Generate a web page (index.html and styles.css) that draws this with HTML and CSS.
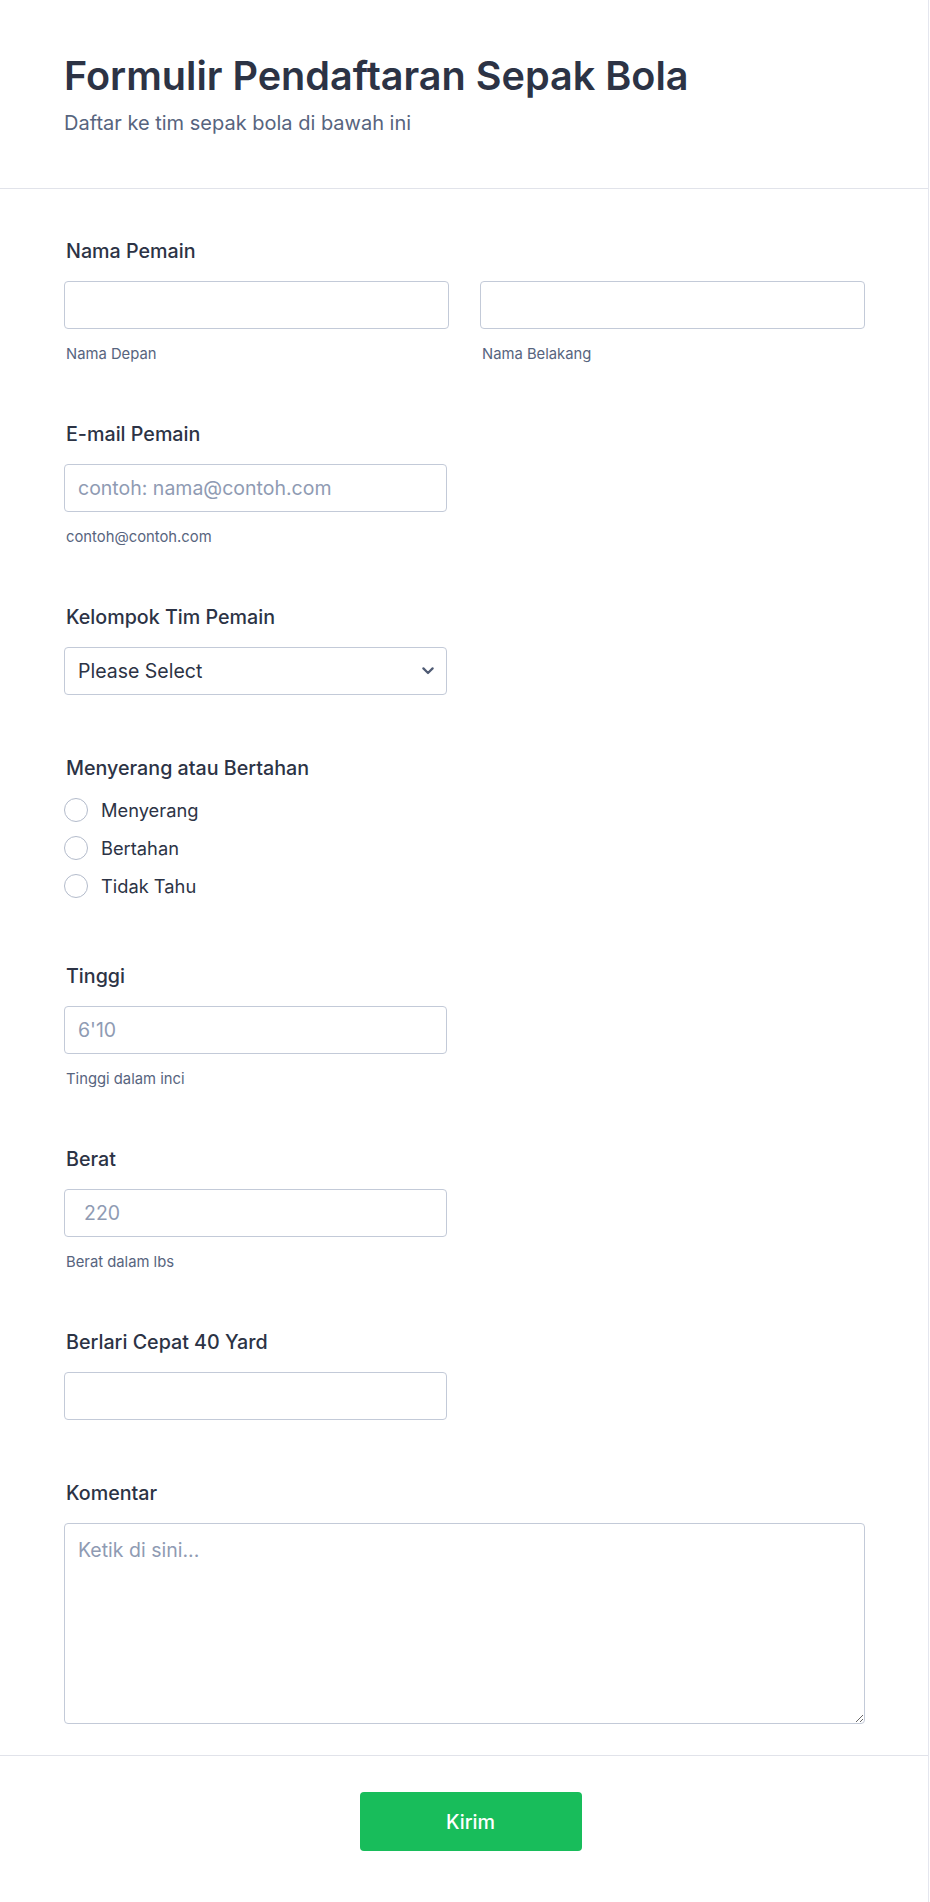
FILE: index.html
```html
<!DOCTYPE html>
<html lang="id">
<head>
<meta charset="utf-8">
<title>Formulir Pendaftaran Sepak Bola</title>
<link rel="stylesheet" href="styles.css">
</head>
<body>
<div class="page">
  <header class="form-header">
    <h1 class="form-title">Formulir Pendaftaran Sepak Bola</h1>
    <p class="form-subtitle">Daftar ke tim sepak bola di bawah ini</p>
  </header>

  <main class="form-body">
    <div class="field">
      <div class="label">Nama Pemain</div>
      <div class="name-row">
        <div class="name-col">
          <input class="input" type="text">
          <div class="sub">Nama Depan</div>
        </div>
        <div class="name-col">
          <input class="input" type="text">
          <div class="sub">Nama Belakang</div>
        </div>
      </div>
    </div>

    <div class="field">
      <div class="label">E-mail Pemain</div>
      <input class="input input-single" type="email" placeholder="contoh: nama@contoh.com">
      <div class="sub">contoh@contoh.com</div>
    </div>

    <div class="field field-plain">
      <div class="label">Kelompok Tim Pemain</div>
      <div class="select-wrap">
        <select class="select">
          <option>Please Select</option>
        </select>
        <svg class="chevron" width="12" height="8" viewBox="0 0 12 8" aria-hidden="true">
          <path d="M1.4 1.4 L6 6 L10.6 1.4" fill="none" stroke="#4f5b74" stroke-width="2.2" stroke-linecap="round" stroke-linejoin="round"/>
        </svg>
      </div>
    </div>

    <div class="field field-radio">
      <div class="label">Menyerang atau Bertahan</div>
      <div class="options">
        <label class="option"><span class="radio"></span><span class="option-text">Menyerang</span></label>
        <label class="option"><span class="radio"></span><span class="option-text">Bertahan</span></label>
        <label class="option"><span class="radio"></span><span class="option-text">Tidak Tahu</span></label>
      </div>
    </div>

    <div class="field">
      <div class="label">Tinggi</div>
      <input class="input input-single" type="text" placeholder="6'10">
      <div class="sub">Tinggi dalam inci</div>
    </div>

    <div class="field">
      <div class="label">Berat</div>
      <input class="input input-single input-number" type="text" placeholder="220">
      <div class="sub">Berat dalam lbs</div>
    </div>

    <div class="field field-plain">
      <div class="label">Berlari Cepat 40 Yard</div>
      <input class="input input-single" type="text">
    </div>

    <div class="field">
      <div class="label">Komentar</div>
      <textarea class="textarea" placeholder="Ketik di sini..."></textarea>
    </div>
  </main>

  <footer class="form-footer">
    <button class="submit" type="button">Kirim</button>
  </footer>
</div>
</body>
</html>
```

FILE: styles.css
```css
* {
  box-sizing: border-box;
}

html, body {
  margin: 0;
  padding: 0;
  background: #ffffff;
}

body {
  font-family: Inter, "Noto Sans", "Liberation Sans", sans-serif;
  color: #2c3345;
}

.page {
  width: 929px;
  min-height: 1902px;
  border-right: 1px solid #e4e6ee;
  background: #ffffff;
}

/* Header */
.form-header {
  padding: 53px 63px 53px 64px;
  border-bottom: 1px solid #e1e3ea;
}

.form-title {
  margin: 0;
  font-size: 39.6px;
  line-height: 46px;
  font-weight: 600;
  color: #2c3345;
}

.form-subtitle {
  margin: 12px 0 0 0;
  font-size: 20px;
  line-height: 24px;
  font-weight: 400;
  color: #57647e;
}

/* Body */
.form-body {
  padding: 50px 63px 31px 64px;
}

.field {
  padding-bottom: 58px;
}

.field-plain {
  padding-bottom: 61px;
}

.field-radio {
  padding-bottom: 66px;
}

.field:last-child {
  padding-bottom: 0;
}

.label {
  font-size: 19.7px;
  line-height: 24px;
  font-weight: 500;
  color: #2c3345;
  margin-bottom: 18px;
  padding-left: 2px;
}

.name-row {
  display: grid;
  grid-template-columns: 385px 385px;
  column-gap: 31px;
}

.input,
.select,
.textarea {
  display: block;
  font-family: inherit;
  font-size: 19.5px;
  color: #2c3345;
  background: #ffffff;
  border: 1px solid #c3cad8;
  border-radius: 4px;
  outline: none;
}

.input {
  width: 100%;
  height: 48px;
  padding: 0 13px;
}

.input-single {
  width: 383px;
}

.input-number {
  padding-left: 19px;
}

.input::placeholder,
.textarea::placeholder {
  color: #8f9bb3;
  opacity: 1;
}

.sub {
  margin-top: 15px;
  font-size: 14.8px;
  line-height: 20px;
  color: #57647e;
  padding-left: 2px;
}

/* Select */
.select-wrap {
  position: relative;
  width: 383px;
}

.select {
  width: 383px;
  height: 48px;
  padding: 0 40px 0 13px;
  appearance: none;
  -webkit-appearance: none;
}

.chevron {
  position: absolute;
  right: 13px;
  top: 20px;
  pointer-events: none;
}

/* Radios */
.options {
  display: flex;
  flex-direction: column;
  gap: 14px;
  margin-top: 5px;
}

.option {
  display: flex;
  align-items: center;
  gap: 13px;
  height: 24px;
}

.radio {
  width: 24px;
  height: 24px;
  border-radius: 50%;
  border: 1px solid #b3bbcb;
  background: #ffffff;
  flex: none;
}

.option-text {
  font-size: 18.3px;
  line-height: 24px;
  color: #2c3345;
}

/* Textarea */
.textarea {
  width: 801px;
  height: 201px;
  padding: 14px 13px;
  line-height: 24px;
  resize: vertical;
}

/* Footer */
.form-footer {
  border-top: 1px solid #e1e3ea;
  padding: 36px 0 0 13px;
  display: flex;
  justify-content: center;
}

.submit {
  width: 222px;
  height: 59px;
  border: none;
  border-radius: 4px;
  background: #18bd5b;
  color: #ffffff;
  font-family: inherit;
  font-size: 19.7px;
  font-weight: 500;
  cursor: pointer;
}
```
